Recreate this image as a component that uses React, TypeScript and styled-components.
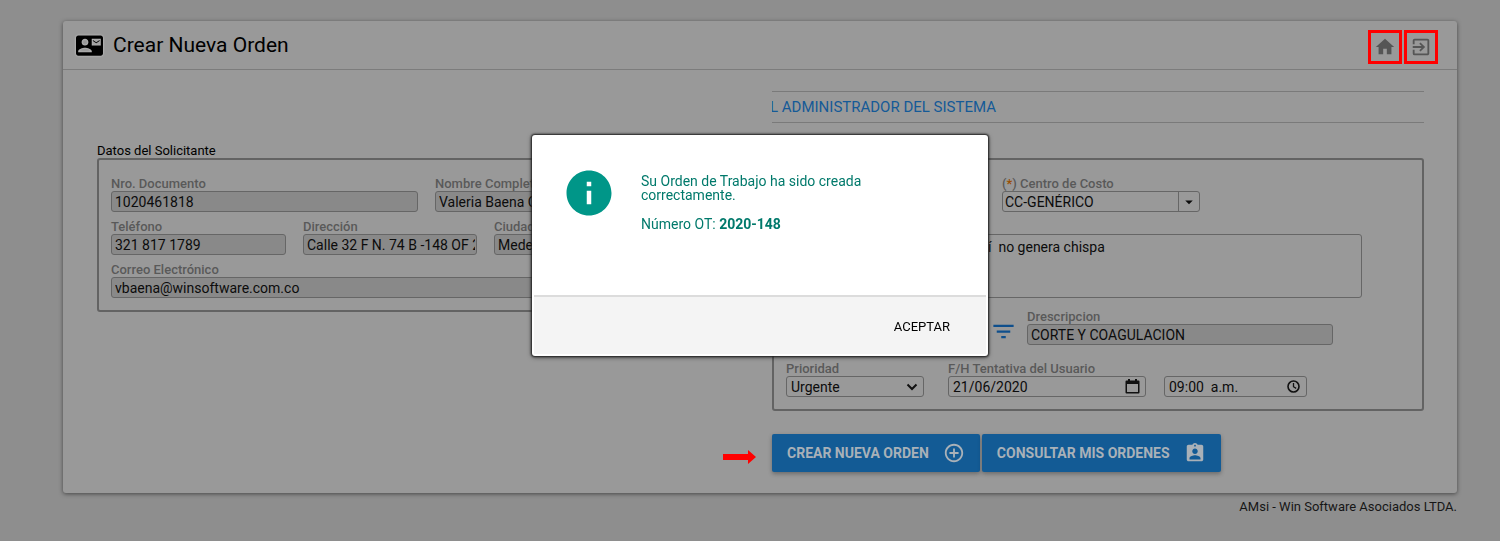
import React from "react";
import styled, { createGlobalStyle } from "styled-components";
import {
  MdContactMail,
  MdHome,
  MdExitToApp,
  MdFilterList,
  MdAddCircleOutline,
  MdAssignmentInd,
  MdInfo,
  MdArrowDropDown,
} from "react-icons/md";

const GlobalStyle = createGlobalStyle`
  *, *::before, *::after { box-sizing: border-box; }
  body {
    margin: 0;
    background: #8e8e8e;
    color: #0c0c0c;
    font-family: Roboto, "Liberation Sans", sans-serif;
    font-size: 14px;
  }
  input, select, textarea, button { font: inherit; color: inherit; }
  svg { display: block; flex: none; }
`;

const Page = styled.div`
  min-height: 100vh;
  padding: 21px 43px 16px 63px;
`;

const Card = styled.main`
  background: #999;
  border-radius: 3px;
  box-shadow: 0 1px 4px rgba(0, 0, 0, 0.5);
`;

const Header = styled.header`
  display: flex;
  align-items: center;
  gap: 10px;
  height: 49px;
  padding: 0 19px 0 13px;
  border-bottom: 1px solid #7c7c7c;
`;

const TitleIcon = styled(MdContactMail)`
  filter: drop-shadow(0 0 1px #d0d0d0);
`;

const Title = styled.h1`
  flex: 1;
  margin: 0;
  font-size: 21px;
  line-height: 24px;
  font-weight: 400;
  color: #000;
`;

const HeaderActions = styled.nav`
  display: flex;
  gap: 2px;
  margin-top: 4px;
`;

const MarkedLink = styled.a`
  display: flex;
  align-items: center;
  justify-content: center;
  width: 34px;
  height: 34px;
  border: 3px solid #f00;
  color: #555;
`;

const Body = styled.form`
  display: grid;
  grid-template-columns: minmax(0, 1fr) minmax(0, 1fr);
  align-items: start;
  column-gap: 23px;
  padding: 21px 33px 21px 34px;
`;

const Notice = styled.p`
  margin: 0 0 20px;
  height: 32px;
  overflow: hidden;
  border: solid #7a7a7a;
  border-width: 1px 0;
  font-size: 15px;
  line-height: 31px;
  white-space: nowrap;
  text-indent: -2px;
  color: #155a97;
`;

const Group = styled.fieldset<{ $offset?: number }>`
  min-width: 0;
  margin: ${(p) => p.$offset ?? 0}px 0 0;
  padding: 0;
  border: 0;
`;

const Legend = styled.legend`
  height: 15px;
  padding: 0;
  font-size: 13px;
  line-height: 15px;
  color: #000;
`;

const Panel = styled.div<{ $gap: number }>`
  display: grid;
  gap: ${(p) => p.$gap}px;
  padding: 17px 12px 12px;
  border: 2px solid #636363;
  border-radius: 3px;
`;

const Row = styled.div<{ $columns: string; $gap?: number; $top?: number }>`
  display: grid;
  grid-template-columns: ${(p) => p.$columns};
  align-items: end;
  column-gap: ${(p) => p.$gap ?? 17}px;
  padding-top: ${(p) => p.$top ?? 0}px;
`;

const FieldBox = styled.div`
  min-width: 0;
`;

const FieldLabel = styled.label`
  display: block;
  font-size: 13px;
  line-height: 14px;
  font-weight: 500;
  white-space: nowrap;
  color: #595959;
`;

const Required = styled.span`
  color: #9a4d00;
`;

const TextInput = styled.input`
  display: block;
  width: 100%;
  height: 21px;
  padding: 0 1px 0 3px;
  border: 1px solid #666;
  border-radius: 3px;
  background: #999;
  &:read-only { background: #898989; }
`;

const TextArea = styled.textarea`
  display: block;
  width: 100%;
  height: 64px;
  padding: 4px 4px 4px 201px;
  border: 1px solid #666;
  border-radius: 3px;
  background: #999;
  line-height: 16px;
  resize: none;
`;

const Shell = styled.div`
  display: flex;
  align-items: center;
  min-width: 0;
  height: 21px;
  border: 1px solid #666;
  border-radius: 3px;
  background: #999;
`;

const ShellInput = styled.input<{ $spaced?: boolean }>`
  flex: 1;
  min-width: 0;
  height: 19px;
  padding: 0 ${(p) => (p.$spaced ? 4 : 2)}px;
  border: 0;
  background: transparent;
`;

const ShellButton = styled.button<{ $divided?: boolean }>`
  display: flex;
  align-items: center;
  justify-content: center;
  width: ${(p) => (p.$divided ? 21 : 26)}px;
  height: 19px;
  padding: 0;
  border: 0;
  border-left: ${(p) => (p.$divided ? "1px solid #666" : "0")};
  background: transparent;
`;

const SelectBox = styled.div`
  display: grid;
  align-items: center;
  margin-right: 6px;
  & > * { grid-area: 1 / 1; }
  & > svg { justify-self: end; margin-right: 6px; pointer-events: none; }
`;

const Select = styled.select`
  width: 100%;
  height: 21px;
  padding: 0 4px;
  border: 1px solid #666;
  border-radius: 3px;
  background: #999;
  appearance: none;
`;

const FilterButton = styled.button`
  display: flex;
  align-items: center;
  justify-content: center;
  justify-self: end;
  width: 20px;
  height: 28px;
  padding: 0;
  border: 0;
  background: transparent;
  color: #0f4f8c;
`;

const Actions = styled.div`
  position: relative;
  display: flex;
  gap: 2px;
  margin-top: 23px;
`;

const Pointer = styled.svg`
  position: absolute;
  right: 100%;
  top: 16px;
  margin-right: 16px;
`;

const ActionButton = styled.button`
  display: flex;
  align-items: center;
  gap: 14px;
  height: 38px;
  padding: 0 15px;
  border: 0;
  border-radius: 2px;
  background: #135b95;
  box-shadow: 0 2px 4px rgba(0, 0, 0, 0.3);
  font-size: 14px;
  font-weight: 700;
  white-space: nowrap;
  color: #a9b1b8;
`;

const Footer = styled.footer`
  padding-top: 6px;
  font-size: 13px;
  line-height: 16px;
  text-align: right;
  color: #161616;
`;

const Backdrop = styled.div`
  position: fixed;
  inset: 0;
  display: flex;
  justify-content: center;
  align-items: flex-start;
  padding: 135px 43px 0 63px;
`;

const Dialog = styled.section`
  width: 456px;
  max-width: 100%;
  padding: 0 2px 2px;
  border-radius: 3px;
  background: #fff;
  box-shadow: 0 0 2px 1px #222, 0 1px 5px rgba(0, 0, 0, 0.6);
`;

const DialogBody = styled.div`
  display: flex;
  gap: 25px;
  height: 160px;
  padding: 31px 28px 0;
  color: #009688;
`;

const DialogText = styled.div`
  flex: 1;
  padding-top: 8px;
  max-width: 250px;
  line-height: 14px;
  color: #00796b;
  p { margin: 0 0 15px; }
`;

const DialogFooter = styled.div`
  display: flex;
  justify-content: flex-end;
  align-items: center;
  height: 59px;
  padding: 1px 20px 0;
  border-top: 2px solid #dcdcdc;
  background: #f4f4f4;
`;

const DialogButton = styled.button`
  height: 36px;
  padding: 0 16px;
  border: 0;
  background: transparent;
  font-size: 13px;
  color: #000;
`;

type FieldProps = {
  id: string;
  label: React.ReactNode;
  value?: string;
  children?: React.ReactNode;
};

function Field({ id, label, value, children }: FieldProps) {
  return (
    <FieldBox>
      <FieldLabel htmlFor={id}>{label}</FieldLabel>
      {children ?? <TextInput id={id} defaultValue={value} readOnly />}
    </FieldBox>
  );
}

const Chevron = () => (
  <svg width="12" height="8" viewBox="0 0 12 8" fill="none" stroke="#111" strokeWidth="2">
    <path d="M1.500 1.500 6 6l4.500-4.500" />
  </svg>
);

const CalendarIcon = () => (
  <svg width="15" height="15" viewBox="0 0 15 15" fill="#111">
    <path fillRule="evenodd" d="M3 0h2v1.500h5V0h2v1.500h1.500a1 1 0 0 1 1 1V13.500a1 1 0 0 1-1 1h-12a1 1 0 0 1-1-1v-11a1 1 0 0 1 1-1H3zM2 5v8h11V5z" />
  </svg>
);

const ClockIcon = () => (
  <svg width="13" height="13" viewBox="0 0 13 13" fill="none" stroke="#111" strokeWidth="1.600">
    <circle cx="6.500" cy="6.500" r="5.500" />
    <path d="M6.500 3v3.700l2.700 1.700" strokeWidth="1.300" />
  </svg>
);

export default function App() {
  return (
    <>
      <GlobalStyle />
      <Page>
        <Card>
          <Header>
            <TitleIcon size={27} color="#000" />
            <Title>Crear Nueva Orden</Title>
            <HeaderActions>
              <MarkedLink href="#inicio" aria-label="Inicio">
                <MdHome size={22} />
              </MarkedLink>
              <MarkedLink href="#salir" aria-label="Salir">
                <MdExitToApp size={22} />
              </MarkedLink>
            </HeaderActions>
          </Header>

          <Body onSubmit={(e) => e.preventDefault()}>
            <Group $offset={52}>
              <Legend>Datos del Solicitante</Legend>
              <Panel $gap={8}>
                <Row $columns="307fr 300fr">
                  <Field id="documento" label="Nro. Documento" value="1020461818" />
                  <Field id="nombre" label="Nombre Completo" value="Valeria Baena O" />
                </Row>
                <Row $columns="175fr 174fr 241fr">
                  <Field id="telefono" label="Teléfono" value="321 817 1789" />
                  <Field id="direccion" label="Dirección" value="Calle 32 F N. 74 B -148 OF 2" />
                  <Field id="ciudad" label="Ciudad" value="Medellín" />
                </Row>
                <Field id="correo" label="Correo Electrónico" value="vbaena@winsoftware.com.co" />
              </Panel>
            </Group>

            <div>
              <Notice>L ADMINISTRADOR DEL SISTEMA</Notice>
              <Group>
                <Legend />
                <Panel $gap={12}>
                  <Row $columns="199fr 198fr 193fr">
                    <span />
                    <Field id="costo" label={<>(<Required>*</Required>) Centro de Costo</>}>
                      <Shell>
                        <ShellInput id="costo" defaultValue="CC-GENÉRICO" />
                        <ShellButton type="button" $divided aria-label="Ver centros de costo">
                          <MdArrowDropDown size={18} />
                        </ShellButton>
                      </Shell>
                    </Field>
                  </Row>
                  <Row $columns="576fr 31fr" $top={10}>
                    <TextArea aria-label="Detalle" defaultValue={"í  no genera chispa"} />
                  </Row>
                  <Row $columns="227fr 306fr 63fr" $gap={14}>
                    <FilterButton type="button" aria-label="Filtrar">
                      <MdFilterList size={27} />
                    </FilterButton>
                    <Field id="descripcion" label="Drescripcion" value="CORTE Y COAGULACION" />
                  </Row>
                  <Row $columns="144fr 198fr 143fr 85fr" $gap={18} $top={5}>
                    <Field id="prioridad" label="Prioridad">
                      <SelectBox>
                        <Select id="prioridad" defaultValue="Urgente">
                          <option>Urgente</option>
                        </Select>
                        <Chevron />
                      </SelectBox>
                    </Field>
                    <Field id="fecha" label="F/H Tentativa del Usuario">
                      <Shell>
                        <ShellInput id="fecha" $spaced defaultValue="21/06/2020" />
                        <ShellButton type="button" aria-label="Elegir fecha">
                          <CalendarIcon />
                        </ShellButton>
                      </Shell>
                    </Field>
                    <Shell>
                      <ShellInput aria-label="Hora" $spaced defaultValue="09:00  a.m." />
                      <ShellButton type="button" aria-label="Elegir hora">
                        <ClockIcon />
                      </ShellButton>
                    </Shell>
                  </Row>
                </Panel>
              </Group>
              <Actions>
                <Pointer width="33" height="14" viewBox="0 0 33 14" fill="#f00">
                  <path d="M0 4h25V0l8 7-8 7v-4H0z" />
                </Pointer>
                <ActionButton type="submit">
                  CREAR NUEVA ORDEN <MdAddCircleOutline size={22} />
                </ActionButton>
                <ActionButton type="button">
                  CONSULTAR MIS ORDENES <MdAssignmentInd size={22} />
                </ActionButton>
              </Actions>
            </div>
          </Body>
        </Card>
        <Footer>AMsi - Win Software Asociados LTDA.</Footer>
      </Page>

      <Backdrop>
        <Dialog role="dialog" aria-modal="true" aria-label="Orden creada">
          <DialogBody>
            <MdInfo size={54} />
            <DialogText>
              <p>Su Orden de Trabajo ha sido creada correctamente.</p>
              <p>
                Número OT: <b>2020-148</b>
              </p>
            </DialogText>
          </DialogBody>
          <DialogFooter>
            <DialogButton type="button">ACEPTAR</DialogButton>
          </DialogFooter>
        </Dialog>
      </Backdrop>
    </>
  );
}
